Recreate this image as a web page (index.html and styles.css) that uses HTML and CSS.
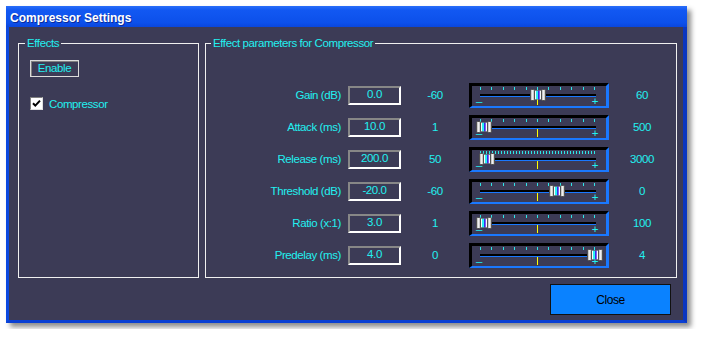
FILE: index.html
```html
<!DOCTYPE html>
<html lang="en">
<head>
  <meta charset="UTF-8" />
  <title>Compressor Settings</title>
  <link rel="stylesheet" href="styles.css">
</head>
<body>
  <svg class="defs" width="0" height="0" aria-hidden="true">
    <defs>
      <linearGradient id="cap" x1="0" x2="1">
        <stop offset="0" stop-color="#707070"/>
        <stop offset=".4" stop-color="#ffffff"/>
        <stop offset="1" stop-color="#a8a8a8"/>
      </linearGradient>
      <linearGradient id="core" x1="0" x2="1">
        <stop offset="0" stop-color="#f0f0f0"/>
        <stop offset=".25" stop-color="#ffffff"/>
        <stop offset=".3" stop-color="#2af2f2"/>
        <stop offset=".5" stop-color="#2af2f2"/>
        <stop offset=".55" stop-color="#2a2ae8"/>
        <stop offset=".72" stop-color="#9a6af0"/>
        <stop offset=".78" stop-color="#ffffff"/>
        <stop offset="1" stop-color="#d8d8d8"/>
      </linearGradient>
      <symbol id="thumb" viewBox="0 0 16 12">
        <rect x="4" y="1.5" width="8" height="9" fill="url(#core)" stroke="#777" stroke-width=".5"/>
        <rect x=".5" y=".5" width="4" height="11" rx="1" fill="url(#cap)" stroke="#505050"/>
        <rect x="11.5" y=".5" width="4" height="11" rx="1" fill="url(#cap)" stroke="#505050"/>
      </symbol>
    </defs>
  </svg>

  <div class="window">
    <div class="titlebar">Compressor Settings</div>
    <div class="client">
      <div class="groups">
        <fieldset class="group effects">
          <legend>Effects</legend>
          <button class="btn-enable">Enable</button>
          <label class="check">
            <span class="box">
              <svg width="9" height="9" viewBox="0 0 9 9"><path d="M1 4.2 L3.3 6.6 L8 1.6" fill="none" stroke="#000" stroke-width="2"/></svg>
            </span>
            Compressor
          </label>
        </fieldset>

        <fieldset class="group params">
          <legend>Effect parameters for Compressor</legend>
          <div class="grid">
            <div class="lbl">Gain (dB)</div>
            <div class="val">0.0</div>
            <div class="min">-60</div>
            <div class="slider">
              <div class="ticks"></div>
              <div class="track"></div>
              <div class="ends"><span>–</span><span class="mark"></span><span class="plus">+</span></div>
              <svg class="thumb" style="left:58px" width="16" height="12"><use href="#thumb"/></svg>
            </div>
            <div class="max">60</div>

            <div class="lbl">Attack (ms)</div>
            <div class="val">10.0</div>
            <div class="min">1</div>
            <div class="slider">
              <div class="ticks"></div>
              <div class="track"></div>
              <div class="ends"><span>–</span><span class="mark"></span><span class="plus">+</span></div>
              <svg class="thumb" style="left:4px" width="16" height="12"><use href="#thumb"/></svg>
            </div>
            <div class="max">500</div>

            <div class="lbl">Release (ms)</div>
            <div class="val">200.0</div>
            <div class="min">50</div>
            <div class="slider">
              <div class="ticks dense"></div>
              <div class="track"></div>
              <div class="ends"><span>–</span><span class="mark"></span><span class="plus">+</span></div>
              <svg class="thumb" style="left:7px" width="16" height="12"><use href="#thumb"/></svg>
            </div>
            <div class="max">3000</div>

            <div class="lbl">Threshold (dB)</div>
            <div class="val">-20.0</div>
            <div class="min">-60</div>
            <div class="slider">
              <div class="ticks"></div>
              <div class="track"></div>
              <div class="ends"><span>–</span><span class="mark"></span><span class="plus">+</span></div>
              <svg class="thumb" style="left:77px" width="16" height="12"><use href="#thumb"/></svg>
            </div>
            <div class="max">0</div>

            <div class="lbl">Ratio (x:1)</div>
            <div class="val">3.0</div>
            <div class="min">1</div>
            <div class="slider">
              <div class="ticks"></div>
              <div class="track"></div>
              <div class="ends"><span>–</span><span class="mark"></span><span class="plus">+</span></div>
              <svg class="thumb" style="left:4px" width="16" height="12"><use href="#thumb"/></svg>
            </div>
            <div class="max">100</div>

            <div class="lbl">Predelay (ms)</div>
            <div class="val">4.0</div>
            <div class="min">0</div>
            <div class="slider">
              <div class="ticks"></div>
              <div class="track"></div>
              <div class="ends"><span>–</span><span class="mark"></span><span class="plus">+</span></div>
              <svg class="thumb" style="left:115px" width="16" height="12"><use href="#thumb"/></svg>
            </div>
            <div class="max">4</div>
          </div>
        </fieldset>
      </div>

      <div class="footer">
        <button class="btn-close">Close</button>
      </div>
    </div>
  </div>
</body>
</html>
```

FILE: styles.css
```css
body {
  margin: 0;
  padding: 6px;
  background: #fff;
  font-family: "Liberation Sans", Arial, sans-serif;
  font-size: 11.5px;
  letter-spacing: -0.4px;
  color: #22f0f0;
}
.defs { position: absolute; width: 0; height: 0; }

.window {
  width: 681px;
  height: 317px;
  display: flex;
  flex-direction: column;
  box-shadow: 4px 4px 5px rgba(0, 0, 0, .45);
}
.titlebar {
  height: 21px;
  box-sizing: border-box;
  padding: 4px 0 0 4px;
  line-height: 17px;
  background: linear-gradient(to bottom, #2a6ef8 0%, #1258f2 20%, #0c50ea 80%, #0a46dc 100%);
  color: #fff;
  font-size: 12px;
  font-weight: bold;
  letter-spacing: 0;
  text-shadow: 1px 1px 0 #0a2a9a;
}
.client {
  flex: 1;
  display: flex;
  flex-direction: column;
  background: #3c3b56;
  border-style: solid;
  border-width: 0 4px 3px 3px;
  border-color: #0b45dc #0a36c0 #0a40d4 #0b48e0;
  padding: 10px 6px 0 9px;
}

.groups {
  display: flex;
  gap: 6px;
  height: 241px;
}
.group {
  margin: 0;
  min-width: 0;
  border: 1px solid #f0f0f0;
  box-sizing: border-box;
}
.group legend {
  padding: 0 2px;
  line-height: 13px;
}
.effects {
  width: 181px;
  padding: 10px 0 0 11px;
}
.effects legend { margin-left: -5px; }
.params {
  flex: 1;
  padding: 29px 0 0 0;
}
.params legend { margin-left: 5px; }

.btn-enable {
  display: block;
  width: 49px;
  height: 17px;
  padding: 0;
  background: transparent;
  border: 1px solid #dcdcdc;
  box-shadow: inset 1px 1px 0 #808080;
  color: #22f0f0;
  font: inherit;
  letter-spacing: inherit;
  line-height: 15px;
}
.check {
  display: flex;
  align-items: center;
  gap: 6px;
  margin-top: 20px;
  height: 13px;
}
.box {
  width: 13px;
  height: 13px;
  box-sizing: border-box;
  display: grid;
  place-items: center;
  background: #fff;
  border: 1px solid;
  border-color: #808080 #e0e0e0 #e0e0e0 #808080;
}

.grid {
  display: grid;
  grid-template-columns: 142px 53px 68px 140px 66px;
  grid-auto-rows: 32px;
  align-items: center;
}
.lbl {
  text-align: right;
  padding-right: 7px;
}
.val {
  height: 19px;
  box-sizing: border-box;
  border: 2px solid;
  border-color: #878787 #fff #fff #878787;
  text-align: center;
  line-height: 13px;
}
.min, .max { text-align: center; }

.slider {
  position: relative;
  height: 25px;
  box-sizing: border-box;
  border: 3px solid;
  border-color: #000 #1a78ff #1a78ff #000;
  border-bottom-width: 2px;
}
.ticks {
  margin: 1px 0 0 8px;
  width: 115px;
  height: 3px;
  background: repeating-linear-gradient(to right, #2ee6e6 0 1px, transparent 1px 11.4px);
}
.ticks.dense {
  background: repeating-linear-gradient(to right, #2ee6e6 0 1px, transparent 1px 3px);
}
.track {
  margin: 4px 10px 0 8px;
  height: 2px;
  background: #000;
  border-bottom: 1px solid #1a78ff;
}
.ends {
  display: grid;
  grid-template-columns: 61px 1px 1fr;
  padding: 0 8px 0 4px;
  height: 9px;
  line-height: 9px;
}
.mark {
  width: 1px;
  height: 8px;
  background: #ffff00;
}
.plus { justify-self: end; }
.thumb {
  position: absolute;
  top: 3px;
}

.footer {
  display: flex;
  justify-content: flex-end;
  padding: 6px 6px 0 0;
}
.btn-close {
  width: 121px;
  height: 31px;
  background: #0a82ff;
  border: 1px solid #111;
  color: #000;
  font: inherit;
  font-size: 12px;
  letter-spacing: inherit;
}
```
